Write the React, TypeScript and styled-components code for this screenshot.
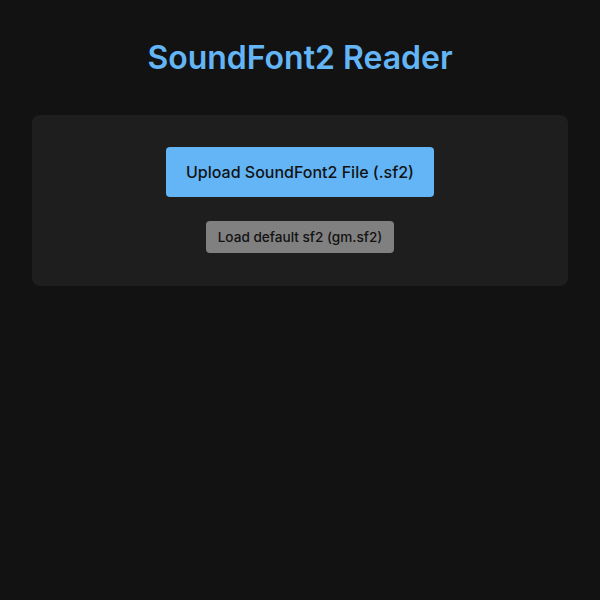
import React from "react";
import styled, { createGlobalStyle } from "styled-components";

const Global = createGlobalStyle`
  html, body { margin: 0; padding: 0; background: #121212; }
  body { font-family: Inter, "Noto Sans", sans-serif; color: #e0e0e0; }
  * { box-sizing: border-box; }
`;

const Page = styled.div`
  min-height: 600px;
  padding: 38px 32px 32px;
  display: flex;
  flex-direction: column;
  align-items: stretch;
`;

const Title = styled.h1`
  margin: 0 0 38px;
  text-align: center;
  font-size: 32px;
  line-height: 39px;
  font-weight: 600;
  color: #64b5f6;
`;

const Card = styled.section`
  background: #1e1e1e;
  border-radius: 8px;
  padding: 32px 32px 33px;
  display: flex;
  flex-direction: column;
  align-items: center;
  gap: 24px;
`;

const Button = styled.button<{ $variant: "primary" | "secondary" }>`
  border: none;
  border-radius: 4px;
  font-family: Inter, "Noto Sans", sans-serif;
  cursor: pointer;
  color: #121212;
  background: ${(p) => (p.$variant === "primary" ? "#64b5f6" : "#808080")};
  height: ${(p) => (p.$variant === "primary" ? "50px" : "32px")};
  padding: ${(p) => (p.$variant === "primary" ? "0 20px" : "0 12px")};
  font-size: ${(p) => (p.$variant === "primary" ? "16px" : "13.6px")};
  font-weight: 500;
`;

export default function App() {
  return (
    <>
      <Global />
      <Page>
        <Title>SoundFont2 Reader</Title>
        <Card>
          <Button $variant="primary">Upload SoundFont2 File (.sf2)</Button>
          <Button $variant="secondary">Load default sf2 (gm.sf2)</Button>
        </Card>
      </Page>
    </>
  );
}
